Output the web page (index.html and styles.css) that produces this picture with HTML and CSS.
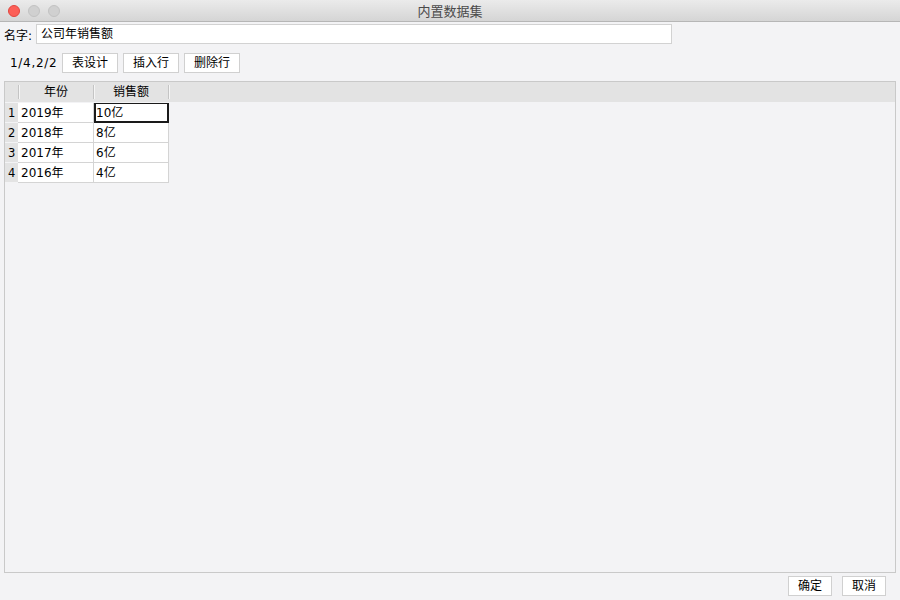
FILE: index.html
```html
<!DOCTYPE html>
<html>
<head>
<meta charset="utf-8">
<link rel="stylesheet" href="styles.css">
</head>
<body>
<div class="window">
  <div class="titlebar">
    <div class="lights">
      <span class="light red"></span>
      <span class="light"></span>
      <span class="light"></span>
    </div>
    <div class="title">内置数据集</div>
    <div></div>
  </div>
  <div class="namerow">
    <span class="label">名字:</span>
    <div class="input">公司年销售额</div>
  </div>
  <div class="toolbar">
    <span class="pager">1/4,2/2</span>
    <button class="btn">表设计</button>
    <button class="btn">插入行</button>
    <button class="btn">删除行</button>
  </div>
  <div class="panel">
    <div class="headstrip">
      <div class="hcell corner"></div>
      <div class="hcell c1">年份</div>
      <div class="hcell c2">销售额</div>
    </div>
    <div class="grid">
      <div class="rn">1</div><div class="cell">2019年</div><div class="cell sel">10亿</div>
      <div class="rn">2</div><div class="cell">2018年</div><div class="cell">8亿</div>
      <div class="rn">3</div><div class="cell">2017年</div><div class="cell">6亿</div>
      <div class="rn">4</div><div class="cell">2016年</div><div class="cell">4亿</div>
    </div>
  </div>
  <div class="footer">
    <button class="btn small">确定</button>
    <button class="btn small">取消</button>
  </div>
</div>
</body>
</html>
```

FILE: styles.css
```css
* { box-sizing: border-box; }
html, body { margin: 0; padding: 0; }
body {
  width: 900px;
  height: 600px;
  background: #f3f3f5;
  font-family: "DejaVu Sans", "Noto Sans CJK SC", sans-serif;
  font-size: 12px;
  color: #000;
  overflow: hidden;
}
.window {
  display: flex;
  flex-direction: column;
  height: 600px;
}
.titlebar {
  height: 22px;
  flex: none;
  border-bottom: 1px solid #b6b6b6;
  background: linear-gradient(#ebebeb, #d5d5d5);
  display: grid;
  grid-template-columns: 1fr auto 1fr;
  align-items: center;
}
.lights {
  display: flex;
  gap: 8px;
  padding-left: 8px;
}
.light {
  width: 12px;
  height: 12px;
  border-radius: 50%;
  background: #d0d0d0;
  border: 1px solid #c2c2c2;
}
.light.red {
  background: #fc5f57;
  border-color: #e2463f;
}
.title {
  font-size: 13px;
  color: #4a4a4a;
  font-family: "Noto Sans CJK SC", sans-serif;
}
.namerow {
  margin-top: 2px;
  height: 20px;
  display: flex;
  align-items: center;
  padding-left: 4px;
  flex: none;
}
.label {
  width: 32px;
}
.input {
  width: 636px;
  height: 20px;
  background: #fff;
  border: 1px solid #d2d2d2;
  padding-left: 4px;
  line-height: 18px;
}
.toolbar {
  margin-top: 9px;
  height: 20px;
  display: flex;
  align-items: center;
  padding-left: 10px;
  gap: 5px;
  flex: none;
}
.pager {
  width: 47px;
  letter-spacing: 0.7px;
}
.btn {
  width: 56px;
  height: 20px;
  background: #fff;
  border: 1px solid #d0d0d0;
  font: inherit;
  color: #000;
  padding: 0;
  line-height: 18px;
}
.btn.small {
  width: 44px;
}
.panel {
  flex: 1;
  margin: 8px 4px 0 4px;
  border: 1px solid #c9c9c9;
  background: #f3f3f5;
}
.headstrip {
  height: 20px;
  background: #e3e3e3;
  display: flex;
  align-items: center;
}
.hcell {
  height: 14px;
  line-height: 14px;
  text-align: center;
  border-right: 1px solid #c4c4c4;
  box-shadow: 1px 0 0 #f5f5f5;
}
.corner { width: 14px; }
.c1 { width: 75px; }
.c2 { width: 75px; }
.grid {
  display: grid;
  grid-template-columns: 13px 76px 75px;
  grid-auto-rows: 20px;
  padding-top: 1px;
}
.rn {
  background: #e3e3e3;
  padding-left: 3px;
  line-height: 21px;
  font-size: 11.5px;
  border-bottom: 1px solid #f3f3f5;
}
.cell {
  background: #fff;
  border-right: 1px solid #d4d4d4;
  border-bottom: 1px solid #d4d4d4;
  padding-left: 2px;
  line-height: 21px;
}
.cell.sel {
  border: 2px solid #1a1a1a;
  border-top-width: 1px;
  padding-left: 0;
  line-height: 19px;
}
.rn + .cell {
  padding-left: 3px;
}
.footer {
  height: 27px;
  flex: none;
  display: flex;
  justify-content: flex-end;
  align-items: flex-start;
  padding-top: 3px;
  padding-right: 14px;
  gap: 10px;
}
```
